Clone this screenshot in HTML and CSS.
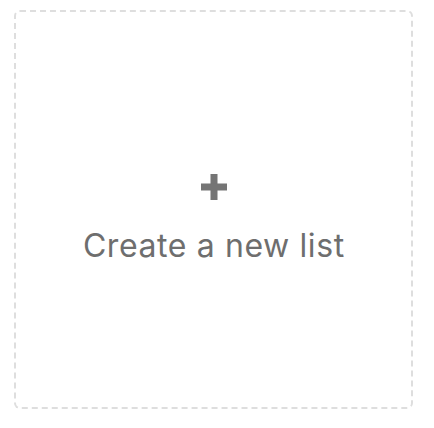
FILE: index.html
```html
<!DOCTYPE html>
<html>
<head>
<meta charset="utf-8">
<link rel="stylesheet" href="styles.css">
</head>
<body>
<div class="card">
  <div class="content">
    <svg class="plus" width="26" height="26" viewBox="0 0 26 26"><rect x="9.5" y="0" width="7" height="26" fill="#757575"/><rect x="0" y="9.5" width="26" height="7" fill="#757575"/></svg>
    <div class="label">Create a new list</div>
  </div>
</div>
</body>
</html>
```
FILE: styles.css
```css
html, body { margin: 0; padding: 0; background: #fff; }
body { padding: 10px 0 0 14px; }
.card {
  box-sizing: border-box;
  width: 399px;
  height: 399px;
  border: 2px dashed #dedede;
  border-radius: 6px;
  display: flex;
  align-items: center;
  justify-content: center;
}
.content {
  display: flex;
  flex-direction: column;
  align-items: center;
  gap: 30px;
  margin-top: 16px;
}
.plus { display: block; }
.label {
  font-family: Inter, "Open Sans", sans-serif;
  font-size: 32px;
  letter-spacing: 0.6px;
  padding-left: 0.6px;
  color: #6e6e6e;
  line-height: 1;
}
```
